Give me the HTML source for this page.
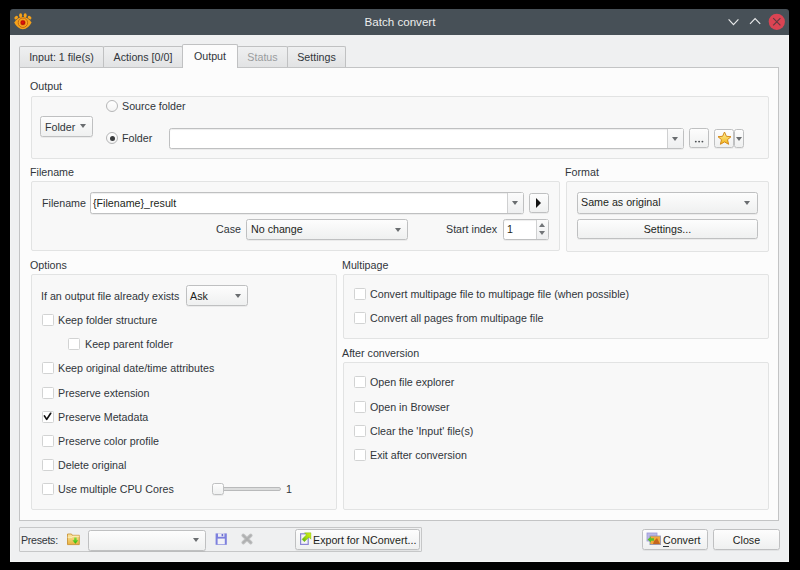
<!DOCTYPE html>
<html><head><meta charset="utf-8">
<style>
*{box-sizing:border-box;margin:0;padding:0}
html,body{width:800px;height:570px;overflow:hidden;background:#000}
body{position:relative;font-family:"Liberation Sans",sans-serif;font-size:10.7px;color:#31363b}
.a{position:absolute}
.t{position:absolute;white-space:nowrap;line-height:12px}
#win{left:10px;top:30px;width:779px;height:532px;background:#eff0f1;border:1px solid #f4f5f5;border-top:none}
#tb{left:10px;top:9px;width:779px;height:26px;background:#475057;border-radius:3px 3px 0 0}
.tab{position:absolute;top:46px;height:21px;border:1px solid #c0c1c2;border-bottom:none;border-radius:2px 2px 0 0;background:linear-gradient(#eff0f1,#e2e3e4);text-align:center;line-height:21px;white-space:nowrap}
.tab.on{top:44px;height:24px;background:#fcfcfc;z-index:2;line-height:22px}
#pane{left:19px;top:67px;width:760px;height:454px;border:1px solid #c3c4c5;background:#fcfcfc}
.grp{position:absolute;border:1px solid #e2e3e3;border-radius:2px;background:#f8f8f8}
.btn{position:absolute;border:1px solid #bfc0c1;border-radius:2.5px;background:linear-gradient(#fdfdfd,#eff0f0);box-shadow:0 1px 0 rgba(0,0,0,0.05)}
.edit{position:absolute;border:1px solid #bfc0c1;border-radius:2.5px;background:#fff;box-shadow:0 1px 0 rgba(0,0,0,0.05),inset 0 1px 1px rgba(0,0,0,0.07)}
.cb{position:absolute;width:12px;height:12px;border:1px solid #d2d3d3;border-radius:1.5px;background:#fff}
.rb{position:absolute;width:12px;height:12px;border:1px solid #b5b6b7;border-radius:50%;background:linear-gradient(#fff,#f4f4f4)}
.arr{position:absolute;width:0;height:0;border-left:3px solid transparent;border-right:3px solid transparent;border-top:4px solid #6a6d70}
.sep{position:absolute;width:1px;background:#cfd0d1}
.dk{color:#1d1f21}
</style></head><body>
<div id="win" class="a"></div>
<div id="tb" class="a"></div>
<!-- title bar -->
<div class="t" style="left:0;width:800px;top:14px;line-height:16px;text-align:center;font-size:11.6px;color:#eceded">Batch convert</div>
<svg class="a" style="left:13px;top:12px" width="20" height="19" viewBox="0 0 20 19">
<defs><radialGradient id="rg" cx="0.45" cy="0.45" r="0.6"><stop offset="0" stop-color="#e8160c"/><stop offset="1" stop-color="#a80a06"/></radialGradient></defs>
<g fill="#f6a21a">
<ellipse cx="7.6" cy="3.4" rx="1.5" ry="2.1"/><ellipse cx="12.2" cy="3.4" rx="1.5" ry="2.1"/>
<ellipse cx="3.2" cy="5.6" rx="2" ry="1.5" transform="rotate(-40 3.2 5.6)"/><ellipse cx="16.6" cy="5.6" rx="2" ry="1.5" transform="rotate(40 16.6 5.6)"/>
<path d="M1.2 10.6 Q4.6 5 9.9 5 Q15.2 5 18.6 10.6 Q15.2 17.2 9.9 17.2 Q4.6 17.2 1.2 10.6 Z"/>
</g>
<circle cx="9.9" cy="10.7" r="4.7" fill="#f7ab2a" stroke="#c1650e" stroke-width="1"/>
<circle cx="9.9" cy="10.7" r="3.2" fill="#f08a14"/>
<circle cx="9.9" cy="10.7" r="2.4" fill="url(#rg)"/>
</svg>
<svg class="a" style="left:726px;top:16px" width="14" height="12" viewBox="0 0 14 12"><path d="M2.6 3.4 L7.5 8.6 L12.4 3.4" fill="none" stroke="#e8e9ea" stroke-width="1.2"/></svg>
<svg class="a" style="left:748px;top:15px" width="14" height="12" viewBox="0 0 14 12"><path d="M2 8.8 L7.1 3.6 L12.2 8.8" fill="none" stroke="#e8e9ea" stroke-width="1.2"/></svg>
<svg class="a" style="left:768px;top:13px" width="18" height="18" viewBox="0 0 18 18"><circle cx="8.8" cy="8.8" r="8.1" fill="#da4453"/><path d="M5.2 5.2 L12.4 12.4 M12.4 5.2 L5.2 12.4" stroke="#5d3a40" stroke-width="1.1"/></svg>

<!-- tabs -->
<div id="pane" class="a"></div>
<div class="tab" style="left:19px;width:85px">Input: 1 file(s)</div>
<div class="tab" style="left:103px;width:80px">Actions [0/0]</div>
<div class="tab on" style="left:182px;width:56px">Output</div>
<div class="tab" style="left:237px;width:51px;color:#9a9c9e">Status</div>
<div class="tab" style="left:287px;width:59px">Settings</div>

<!-- Output group -->
<div class="t" style="left:30px;top:80px">Output</div>
<div class="grp" style="left:31px;top:96px;width:738px;height:63px"></div>
<div class="btn" style="left:40px;top:116px;width:53px;height:21px"></div>
<div class="t" style="left:45px;top:121px">Folder</div>
<div class="arr" style="left:80px;top:124px"></div>
<div class="rb" style="left:106px;top:100px"></div>
<div class="t" style="left:122px;top:100px">Source folder</div>
<div class="rb" style="left:106px;top:132px"></div>
<div class="a" style="left:109.5px;top:135.5px;width:5px;height:5px;border-radius:50%;background:#3a3c3e"></div>
<div class="t" style="left:122px;top:132px">Folder</div>
<div class="edit" style="left:169px;top:128px;width:515px;height:21px"></div>
<div class="a" style="left:667px;top:129px;width:16px;height:19px;background:linear-gradient(#fbfbfb,#eeeff0);border-left:1px solid #cfd0d1"></div>
<div class="arr" style="left:672px;top:137px"></div>
<div class="btn" style="left:689px;top:128px;width:20px;height:20px"></div>
<svg class="a" style="left:694px;top:139px" width="11" height="5" viewBox="0 0 11 5"><circle cx="1.8" cy="2.6" r="0.95" fill="#4b4f53"/><circle cx="5.1" cy="2.6" r="0.95" fill="#4b4f53"/><circle cx="8.4" cy="2.6" r="0.95" fill="#4b4f53"/></svg>
<div class="btn" style="left:714px;top:129px;width:20px;height:19px"></div>
<div class="btn" style="left:734px;top:129px;width:10px;height:19px"></div>
<div class="arr" style="left:736px;top:137px"></div>
<svg class="a" style="left:717px;top:131px" width="15" height="15" viewBox="0 0 15 15"><defs><linearGradient id="sg" x1="0" y1="0" x2="0" y2="1"><stop offset="0" stop-color="#fff3a0"/><stop offset="1" stop-color="#f2b416"/></linearGradient></defs><path d="M7.5 1 L9.4 5.3 L14 5.7 L10.5 8.7 L11.6 13.3 L7.5 10.9 L3.4 13.3 L4.5 8.7 L1 5.7 L5.6 5.3 Z" fill="url(#sg)" stroke="#d48a1a" stroke-width="1" stroke-linejoin="round"/></svg>

<!-- Filename group -->
<div class="t" style="left:30px;top:166px">Filename</div>
<div class="grp" style="left:31px;top:181px;width:529px;height:70px"></div>
<div class="t" style="left:42px;top:197px">Filename</div>
<div class="edit" style="left:90px;top:192px;width:434px;height:22px"></div>
<div class="t dk" style="left:93px;top:197px">{Filename}_result</div>
<div class="a" style="left:507px;top:193px;width:16px;height:20px;background:linear-gradient(#fbfbfb,#eeeff0);border-left:1px solid #cfd0d1"></div>
<div class="arr" style="left:512px;top:201px"></div>
<div class="btn" style="left:529px;top:193px;width:20px;height:20px"></div>
<div class="a" style="left:536px;top:198px;width:0;height:0;border-top:5px solid transparent;border-bottom:5px solid transparent;border-left:5.5px solid #111"></div>
<div class="t" style="left:141px;width:100px;text-align:right;top:223px">Case</div>
<div class="btn" style="left:246px;top:219px;width:162px;height:21px"></div>
<div class="t dk" style="left:251px;top:223px">No change</div>
<div class="arr" style="left:395px;top:228px"></div>
<div class="t" style="left:446px;top:223px">Start index</div>
<div class="edit" style="left:503px;top:219px;width:46px;height:21px"></div>
<div class="t dk" style="left:507px;top:223px">1</div>
<div class="a" style="left:536px;top:220px;width:12px;height:19px;border-left:1px solid #cfd0d1;background:linear-gradient(#fbfbfb,#eeeff0)"></div>
<div class="a" style="left:539px;top:223px;width:0;height:0;border-left:3px solid transparent;border-right:3px solid transparent;border-bottom:4px solid #727578"></div>
<div class="a" style="left:539px;top:231px;width:0;height:0;border-left:3px solid transparent;border-right:3px solid transparent;border-top:4px solid #727578"></div>

<!-- Format group -->
<div class="t" style="left:565px;top:166px">Format</div>
<div class="grp" style="left:566px;top:181px;width:203px;height:71px"></div>
<div class="btn" style="left:577px;top:192px;width:181px;height:22px"></div>
<div class="t dk" style="left:581px;top:196px">Same as original</div>
<div class="arr" style="left:744px;top:201px"></div>
<div class="btn" style="left:577px;top:219px;width:181px;height:20px"></div>
<div class="t dk" style="left:577px;top:223px;width:181px;text-align:center">Settings...</div>

<!-- Options group -->
<div class="t" style="left:30px;top:259px">Options</div>
<div class="grp" style="left:31px;top:274px;width:306px;height:236px"></div>
<div class="t" style="left:41px;top:290px">If an output file already exists</div>
<div class="btn" style="left:186px;top:285px;width:62px;height:21px"></div>
<div class="t dk" style="left:190px;top:290px">Ask</div>
<div class="arr" style="left:235px;top:294px"></div>

<div class="cb" style="left:42px;top:314px"></div>
<div class="t" style="left:58px;top:314px">Keep folder structure</div>
<div class="cb" style="left:68px;top:338px"></div>
<div class="t" style="left:85px;top:338px">Keep parent folder</div>
<div class="cb" style="left:42px;top:362px"></div>
<div class="t" style="left:58px;top:362px">Keep original date/time attributes</div>
<div class="cb" style="left:42px;top:387px"></div>
<div class="t" style="left:58px;top:387px">Preserve extension</div>
<div class="cb" style="left:42px;top:411px"></div>
<svg class="a" style="left:42px;top:411px" width="12" height="12" viewBox="0 0 12 12"><path d="M2.4 4.9 L4.7 8.4 L8.7 2.3" fill="none" stroke="#111" stroke-width="1.7" stroke-linecap="round" stroke-linejoin="round"/></svg>
<div class="t" style="left:58px;top:411px">Preserve Metadata</div>
<div class="cb" style="left:42px;top:435px"></div>
<div class="t" style="left:58px;top:435px">Preserve color profile</div>
<div class="cb" style="left:42px;top:459px"></div>
<div class="t" style="left:58px;top:459px">Delete original</div>
<div class="cb" style="left:42px;top:483px"></div>
<div class="t" style="left:58px;top:483px">Use multiple CPU Cores</div>
<div class="a" style="left:214px;top:487px;width:67px;height:4px;border:1px solid #b9babb;border-radius:2px;background:#dcdddd"></div>
<div class="btn" style="left:212px;top:483px;width:12px;height:12px"></div>
<div class="t" style="left:286px;top:483px">1</div>

<!-- Multipage group -->
<div class="t" style="left:342px;top:259px">Multipage</div>
<div class="grp" style="left:343px;top:274px;width:426px;height:65px"></div>
<div class="cb" style="left:354px;top:288px"></div>
<div class="t" style="left:370px;top:288px">Convert multipage file to multipage file (when possible)</div>
<div class="cb" style="left:354px;top:312px"></div>
<div class="t" style="left:370px;top:312px">Convert all pages from multipage file</div>

<!-- After conversion group -->
<div class="t" style="left:342px;top:347px">After conversion</div>
<div class="grp" style="left:343px;top:362px;width:426px;height:148px"></div>
<div class="cb" style="left:354px;top:376px"></div>
<div class="t" style="left:370px;top:376px">Open file explorer</div>
<div class="cb" style="left:354px;top:401px"></div>
<div class="t" style="left:370px;top:401px">Open in Browser</div>
<div class="cb" style="left:354px;top:425px"></div>
<div class="t" style="left:370px;top:425px">Clear the 'Input' file(s)</div>
<div class="cb" style="left:354px;top:449px"></div>
<div class="t" style="left:370px;top:449px">Exit after conversion</div>

<!-- bottom bar -->
<div class="a" style="left:19px;top:527px;width:403px;height:25px;border:1px solid #c6c7c8;border-radius:1px"></div>
<div class="t" style="left:21px;top:534px;letter-spacing:-0.3px">Presets:</div>
<svg class="a" style="left:66px;top:532px" width="15" height="14" viewBox="0 0 15 14">
<defs><linearGradient id="fg" x1="0" y1="0" x2="0" y2="1"><stop offset="0" stop-color="#fbe7a4"/><stop offset="1" stop-color="#e9b23d"/></linearGradient>
<linearGradient id="gg" x1="0" y1="0" x2="0" y2="1"><stop offset="0" stop-color="#7fe03a"/><stop offset="1" stop-color="#2fb511"/></linearGradient></defs>
<path d="M1.5 2 L5.5 2 L6.3 3.3 L13.3 3.3 L13.3 12.6 L1.5 12.6 Z" fill="url(#fg)" stroke="#c48a2a" stroke-width="0.8"/>
<path d="M1.5 5.2 L6.2 5.2 L6.8 4.2 L13.3 4.2" fill="none" stroke="#fff6cf" stroke-width="0.8"/>
<path d="M8.2 5.6 L10.6 5.6 L10.6 8.2 L12.4 8.2 L9.4 11.8 L6.4 8.2 L8.2 8.2 Z" fill="url(#gg)"/>
</svg>
<div class="btn" style="left:88px;top:530px;width:118px;height:21px"></div>
<svg class="a" style="left:214px;top:533px" width="14" height="13" viewBox="0 0 14 13">
<path d="M1.6 0.4 L12.8 0.4 L12.8 11.8 L1.6 11.8 Z" fill="#7d80de"/>
<rect x="3.6" y="5.6" width="7.2" height="5.6" fill="#f2f2f6"/>
<rect x="4" y="0.4" width="6.4" height="3.4" fill="#eeeef4"/>
<rect x="7.6" y="1" width="1.6" height="2.2" fill="#6b6ed0"/>
</svg>
<svg class="a" style="left:240px;top:532px" width="14" height="14" viewBox="0 0 14 14"><path d="M3.2 3.4 L10.8 10.6 M10.8 3.4 L3.2 10.6" stroke="#c2c3c4" stroke-width="3.6" stroke-linecap="round"/><path d="M3.2 3.4 L10.8 10.6 M10.8 3.4 L3.2 10.6" stroke="#aeafb0" stroke-width="1.6" stroke-linecap="round"/></svg>
<div class="arr" style="left:193px;top:538px"></div>
<div class="btn" style="left:295px;top:529px;width:125px;height:21px"></div>
<div class="t dk" style="left:313px;top:534px">Export for NConvert...</div>
<svg class="a" style="left:299px;top:532px" width="14" height="15" viewBox="0 0 14 15">
<defs><linearGradient id="eg" x1="1" y1="0" x2="0" y2="1"><stop offset="0" stop-color="#d4ee18"/><stop offset="0.5" stop-color="#a6dc10"/><stop offset="1" stop-color="#4aa812"/></linearGradient></defs>
<rect x="1.6" y="1.8" width="7.6" height="10.6" fill="#f4f4f6" stroke="#8c86d4" stroke-width="1.2"/>
<path d="M11.9 0.8 L11.9 7.2 L9.9 5.2 L5.4 9.7 L3 7.3 L7.5 2.8 L5.5 0.8 Z" fill="url(#eg)" stroke="#6cb010" stroke-width="0.4" stroke-linejoin="round"/>
</svg>
<div class="btn" style="left:642px;top:529px;width:66px;height:21px"></div>
<div class="t dk" style="left:663px;top:534px">Convert</div>
<div class="a" style="left:663px;top:546px;width:6px;height:1px;background:#31363b"></div>
<svg class="a" style="left:646px;top:532px" width="16" height="14" viewBox="0 0 16 14">
<rect x="1" y="1" width="10" height="8" fill="#b9b8e6" stroke="#9b98d6" stroke-width="0.8"/>
<rect x="4" y="4" width="10.5" height="8.6" fill="#f2a93b" stroke="#8a8fb6" stroke-width="0.8"/>
<path d="M8 9 L11 6 L14 12 L7 12 Z" fill="#c4661c"/>
<path d="M1.5 7.5 L5 4.5 L5 6.3 L8 6.3 L8 8.7 L5 8.7 L5 10.5 Z" fill="#5cc02a"/>
</svg>
<div class="btn" style="left:713px;top:529px;width:67px;height:21px"></div>
<div class="t dk" style="left:713px;top:534px;width:67px;text-align:center">Close</div>
</body></html>
